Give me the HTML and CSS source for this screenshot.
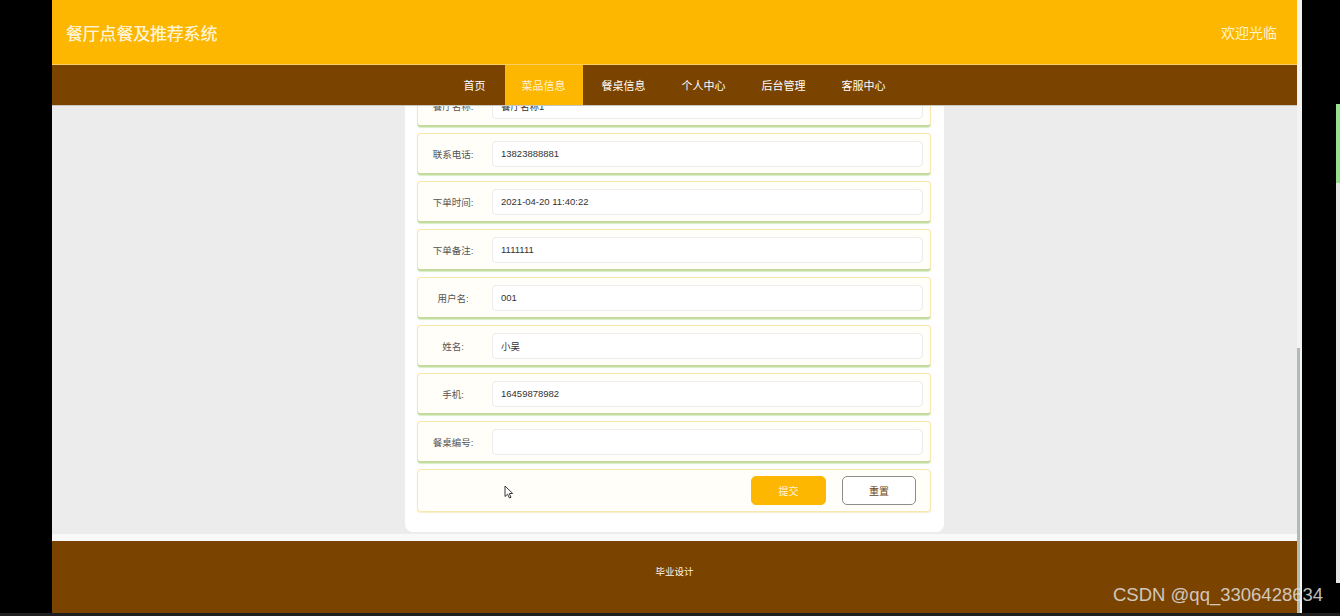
FILE: index.html
```html
<!DOCTYPE html>
<html lang="zh-CN">
<head>
<meta charset="utf-8">
<title>餐厅点餐及推荐系统</title>
<link rel="stylesheet" href="styles.css">
</head>
<body>
<div class="screen">
  <div class="side-left"></div>
  <div class="page">
    <header class="topbar">
      <h1 class="brand">餐厅点餐及推荐系统</h1>
      <span class="welcome">欢迎光临</span>
    </header>
    <nav class="nav">
      <a class="nav-item">首页</a>
      <a class="nav-item active">菜品信息</a>
      <a class="nav-item">餐桌信息</a>
      <a class="nav-item">个人中心</a>
      <a class="nav-item">后台管理</a>
      <a class="nav-item">客服中心</a>
    </nav>
    <main class="main">
      <div class="card">
        <form class="form">
          <div class="row"><label class="label">餐厅名称:</label><input class="field" value="餐厅名称1" readonly></div>
          <div class="row"><label class="label">联系电话:</label><input class="field" value="13823888881" readonly></div>
          <div class="row"><label class="label">下单时间:</label><input class="field" value="2021-04-20 11:40:22" readonly></div>
          <div class="row"><label class="label">下单备注:</label><input class="field" value="1111111" readonly></div>
          <div class="row"><label class="label">用户名:</label><input class="field" value="001" readonly></div>
          <div class="row"><label class="label">姓名:</label><input class="field" value="小吴" readonly></div>
          <div class="row"><label class="label">手机:</label><input class="field" value="16459878982" readonly></div>
          <div class="row"><label class="label">餐桌编号:</label><input class="field" value="" readonly></div>
          <div class="row actions">
            <button type="button" class="btn btn-submit">提交</button>
            <button type="button" class="btn btn-reset">重置</button>
          </div>
        </form>
      </div>
    </main>
    <div class="strip"></div>
    <footer class="footer">毕业设计</footer>
  </div>
  <div class="scrollbar"><div class="thumb"></div></div>
  <div class="side-right">
    <div class="edge">
      <div class="edge-top"></div>
      <div class="edge-green"></div>
      <div class="edge-light"></div>
    </div>
  </div>
</div>
<div class="taskbar"></div>
<div class="watermark">CSDN @qq_3306428634</div>
<svg class="cursor" width="10" height="14" viewBox="0 0 10 14"><path d="M1 1 L1 11.5 L3.6 9.2 L5.4 13 L7 12.3 L5.3 8.6 L8.6 8.4 Z" fill="#fff" stroke="#222" stroke-width="0.9" stroke-linejoin="round"/></svg>
</body>
</html>
```

FILE: styles.css
```css
html, body {
  margin: 0;
  padding: 0;
}
body {
  width: 1340px;
  height: 616px;
  overflow: hidden;
  background: #000;
  position: relative;
  font-family: "Liberation Sans", "Noto Sans CJK SC", sans-serif;
}
.screen {
  display: flex;
  height: 613px;
}
.side-left {
  width: 52px;
  background: #000;
}
.page {
  width: 1245px;
  display: flex;
  flex-direction: column;
  background: #ececec;
}
.topbar {
  height: 64px;
  border-bottom: 1px solid #f9cf62;
  background: #fdb701;
  display: flex;
  align-items: center;
  justify-content: space-between;
  padding: 0 20px 0 14px;
}
.brand {
  margin: 0;
  font-size: 17px;
  font-weight: normal;
  color: #fff3d2;
  letter-spacing: -0.2px;
  text-shadow: 0 0 0.4px #fff3d2;
}
.welcome {
  font-size: 14px;
  color: #fff3d2;
}
.nav {
  height: 41px;
  background: #7a4300;
  display: flex;
  justify-content: center;
  gap: 2px;
  border-bottom: 1px solid #c9c6bd;
  box-sizing: border-box;
}
.nav-item {
  padding: 0 17px;
  display: flex;
  align-items: center;
  font-size: 11px;
  color: #fff;
  cursor: pointer;
}
.nav-item.active {
  background: #fdb701;
  color: #fff3d2;
}
.main {
  height: 427px;
  overflow: hidden;
}
.card {
  width: 539px;
  margin: -33px auto 0;
  box-sizing: border-box;
  background: #fff;
  border-radius: 0 0 8px 8px;
  padding: 12px 13px 20px 12px;
}
.form {
  display: flex;
  flex-direction: column;
  gap: 6px;
  margin: 0;
}
.row {
  height: 42px;
  box-sizing: border-box;
  display: flex;
  align-items: center;
  background: #fffef9;
  border: 1px solid #f8e7ae;
  border-bottom: 2px solid #c2dc9b;
  border-radius: 4px;
  box-shadow: 0 1px 1px rgba(150, 200, 100, 0.35);
}
.label {
  width: 70px;
  margin-right: 4px;
  text-align: center;
  font-size: 9.5px;
  color: #555;
  flex: none;
}
.field {
  flex: 1;
  height: 26px;
  margin-right: 7px;
  box-sizing: border-box;
  border: 1px solid #ececec;
  border-radius: 4px;
  background: #fff;
  padding: 0 0 0 8px;
  font-family: "Liberation Sans", "Noto Sans CJK SC", sans-serif;
  font-size: 9.5px;
  color: #333;
  outline: none;
}
.row.actions {
  height: 43px;
  justify-content: flex-end;
  gap: 16px;
  padding-right: 14px;
  border-bottom: 1px solid #f8e7ae;
  box-shadow: 0 1px 1px rgba(240, 220, 150, 0.5);
}
.btn {
  height: 29px;
  width: 75px;
  border-radius: 5px;
  font-family: "Liberation Sans", "Noto Sans CJK SC", sans-serif;
  font-size: 10px;
  cursor: pointer;
  padding: 0;
}
.btn-submit {
  background: #fdb701;
  border: 1px solid #fdb701;
  color: #fff5dc;
}
.btn-reset {
  width: 74px;
  background: #fff;
  border: 1px solid #8c8c8c;
  color: #6b4514;
}
.strip {
  height: 8px;
  background: #f9f9f7;
  border-top: 1px solid #ececec;
  box-sizing: border-box;
}
.footer {
  height: 72px;
  background: #7a4300;
  display: flex;
  align-items: center;
  justify-content: center;
  font-size: 9.5px;
  color: #fff6e6;
  padding-bottom: 12px;
  box-sizing: border-box;
}
.scrollbar {
  width: 5px;
  background: #f3f3f3;
  display: flex;
  flex-direction: column;
  justify-content: flex-end;
}
.thumb {
  height: 265px;
  width: 3px;
  background: #b3bcb3;
}
.side-right {
  flex: 1;
  background: #000;
  display: flex;
  justify-content: flex-end;
}
.edge {
  width: 4px;
  display: flex;
  flex-direction: column;
}
.edge-top {
  height: 104px;
  background: #000;
}
.edge-green {
  height: 79px;
  background: #9be08f;
}
.edge-light {
  height: 400px;
  background: #e6e6e6;
}
.taskbar {
  height: 3px;
  background: #1f1f1f;
}
.watermark {
  position: absolute;
  left: 1113px;
  top: 584px;
  font-family: "Liberation Sans", sans-serif;
  font-size: 18.5px;
  color: rgba(225, 225, 225, 0.85);
  white-space: nowrap;
  letter-spacing: 0;
}
.cursor {
  position: absolute;
  left: 504px;
  top: 485px;
}
```
